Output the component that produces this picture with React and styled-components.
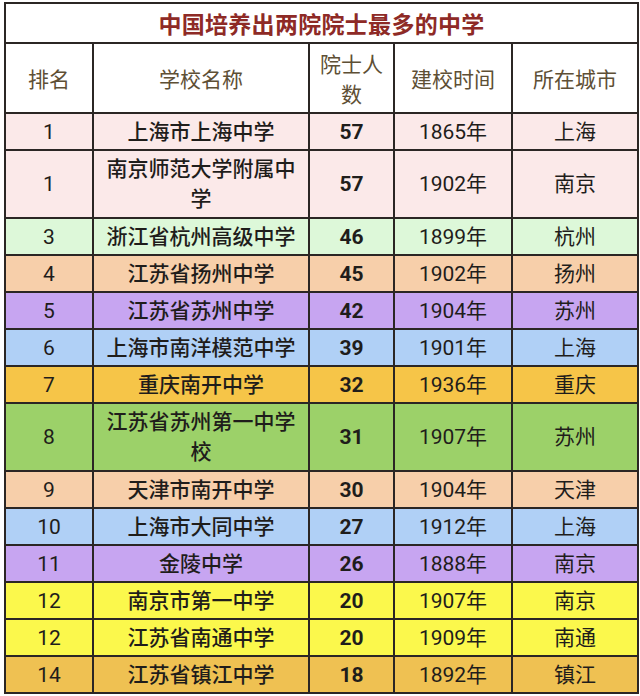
import React from "react";
import styled, { createGlobalStyle } from "styled-components";

const GlobalStyle = createGlobalStyle`
  html, body {
    margin: 0;
    padding: 0;
    background: #ffffff;
  }
  body {
    font-family: "Roboto", "Noto Sans CJK SC", sans-serif;
  }
`;

const rows = [
  { rank: "1", name: "上海市上海中学", count: 57, year: 1865, city: "上海", bg: "#fbe9e9" },
  { rank: "1", name: "南京师范大学附属中学", count: 57, year: 1902, city: "南京", bg: "#fbe9e9", tall: true },
  { rank: "3", name: "浙江省杭州高级中学", count: 46, year: 1899, city: "杭州", bg: "#ddf8d9" },
  { rank: "4", name: "江苏省扬州中学", count: 45, year: 1902, city: "扬州", bg: "#f7cfaa" },
  { rank: "5", name: "江苏省苏州中学", count: 42, year: 1904, city: "苏州", bg: "#c7a5f1" },
  { rank: "6", name: "上海市南洋模范中学", count: 39, year: 1901, city: "上海", bg: "#b0d0f6" },
  { rank: "7", name: "重庆南开中学", count: 32, year: 1936, city: "重庆", bg: "#f6c548" },
  { rank: "8", name: "江苏省苏州第一中学校", count: 31, year: 1907, city: "苏州", bg: "#9cd169", tall: true },
  { rank: "9", name: "天津市南开中学", count: 30, year: 1904, city: "天津", bg: "#f7cfaa" },
  { rank: "10", name: "上海市大同中学", count: 27, year: 1912, city: "上海", bg: "#b0d0f6" },
  { rank: "11", name: "金陵中学", count: 26, year: 1888, city: "南京", bg: "#c7a5f1" },
  { rank: "12", name: "南京市第一中学", count: 20, year: 1907, city: "南京", bg: "#fbf84c" },
  { rank: "12", name: "江苏省南通中学", count: 20, year: 1909, city: "南通", bg: "#fbf84c" },
  { rank: "14", name: "江苏省镇江中学", count: 18, year: 1892, city: "镇江", bg: "#efc152" },
];

const Page = styled.div`
  padding: 2px 3px 0 4px;
`;

const Table = styled.table`
  width: 633px;
  border-collapse: collapse;
  table-layout: fixed;
  border: 2px solid #2b2624;
`;

const Col = styled.col`
  width: ${(p) => p.$w}px;
`;

const TitleCell = styled.th`
  height: 38px;
  padding: 0;
  background: #ffffff;
  color: #8e2a26;
  font-family: "Noto Sans CJK SC", sans-serif;
  font-size: 23px;
  font-weight: 700;
  line-height: 30px;
  letter-spacing: 0.3px;
  text-align: center;
  border: 2px solid #2b2624;
`;

const HeadCell = styled.th`
  height: 68px;
  padding: 0 8px;
  background: #ffffff;
  color: #5e4f35;
  font-family: "Noto Sans CJK SC", sans-serif;
  font-size: 21px;
  font-weight: 400;
  line-height: 30px;
  text-align: center;
  border: 2px solid #2b2624;
`;

const Row = styled.tr`
  background: ${(p) => p.$bg};
  height: ${(p) => (p.$tall ? 68 : 37)}px;
`;

const Cell = styled.td`
  padding: 0 8px;
  color: #1f1d1b;
  font-family: "Roboto", "Noto Sans CJK SC", sans-serif;
  font-size: 21px;
  font-weight: ${(p) => (p.$bold ? 700 : p.$cjk ? 500 : 400)};
  line-height: 30px;
  text-align: center;
  vertical-align: middle;
  border: 2px solid #2b2624;
`;

export default function App() {
  return (
    <Page>
      <GlobalStyle />
      <Table>
        <colgroup>
          <Col $w={88} />
          <Col $w={216} />
          <Col $w={85} />
          <Col $w={118} />
          <Col $w={126} />
        </colgroup>
        <thead>
          <tr>
            <TitleCell colSpan={5}>中国培养出两院院士最多的中学</TitleCell>
          </tr>
          <tr>
            <HeadCell>排名</HeadCell>
            <HeadCell>学校名称</HeadCell>
            <HeadCell>院士人数</HeadCell>
            <HeadCell>建校时间</HeadCell>
            <HeadCell>所在城市</HeadCell>
          </tr>
        </thead>
        <tbody>
          {rows.map((r, i) => (
            <Row key={i} $bg={r.bg} $tall={r.tall}>
              <Cell>{r.rank}</Cell>
              <Cell $cjk>{r.name}</Cell>
              <Cell $bold>{r.count}</Cell>
              <Cell>{r.year}年</Cell>
              <Cell>{r.city}</Cell>
            </Row>
          ))}
        </tbody>
      </Table>
    </Page>
  );
}
